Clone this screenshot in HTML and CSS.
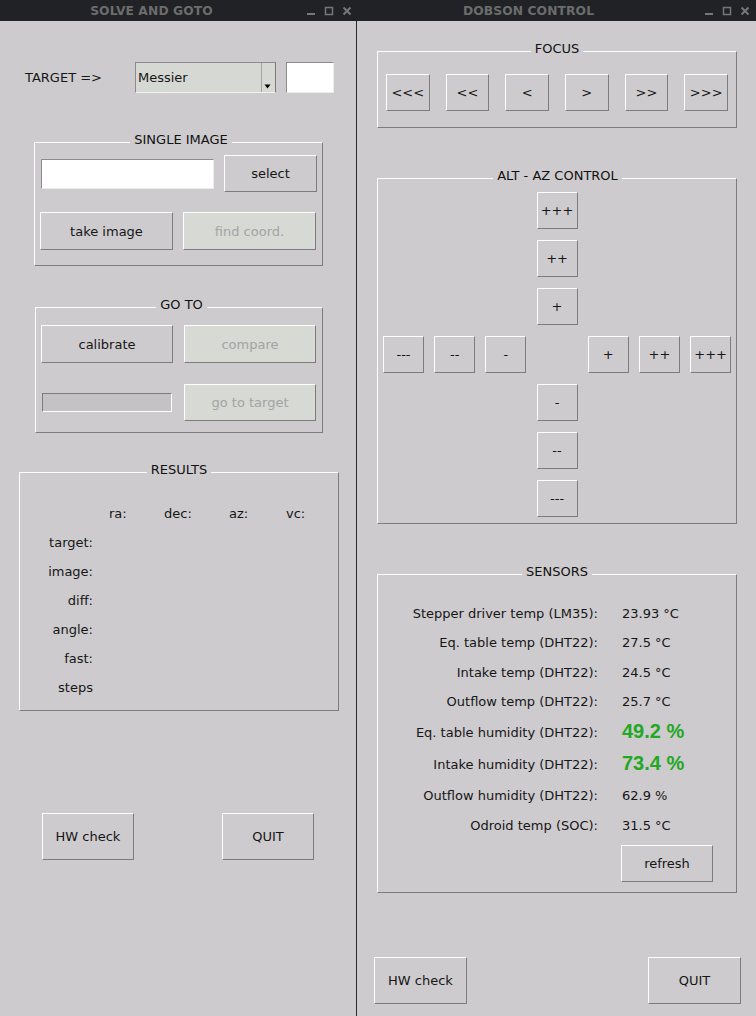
FILE: index.html
```html
<!DOCTYPE html>
<html>
<head>
<meta charset="utf-8">
<title>Dobson</title>
<link rel="stylesheet" href="styles.css">
</head>
<body>
<div class="titlebar">
  <div class="tb-seg tb-left">
    <span class="tb-title">SOLVE AND GOTO</span>
    <svg class="tb-ctrl" viewBox="0 0 53 21" width="53" height="21"><path d="M4 14h8" stroke="#777" stroke-width="2"/><rect x="22.5" y="7.5" width="7" height="7" fill="none" stroke="#777" stroke-width="1.5"/><path d="M40.5 7.5l7 7M47.5 7.5l-7 7" stroke="#777" stroke-width="2"/></svg>
  </div>
  <div class="tb-seg tb-right">
    <span class="tb-title">DOBSON CONTROL</span>
    <svg class="tb-ctrl" viewBox="0 0 53 21" width="53" height="21"><path d="M4 14h8" stroke="#777" stroke-width="2"/><rect x="22.5" y="7.5" width="7" height="7" fill="none" stroke="#777" stroke-width="1.5"/><path d="M40.5 7.5l7 7M47.5 7.5l-7 7" stroke="#777" stroke-width="2"/></svg>
  </div>
</div>
<div class="main">
  <section class="pane pane-left">
    <div class="target-row">
      <span class="target-label">TARGET =&gt;</span>
      <div class="combo">
        <span class="combo-text">Messier</span>
        <span class="combo-arrow"><svg viewBox="0 0 12 29" width="12" height="29"><path d="M2.5 21.5h6l-3 4z" fill="#000"/></svg></span>
      </div>
      <div class="entry entry-small"></div>
    </div>

    <fieldset class="frame frame-single">
      <legend>SINGLE IMAGE</legend>
      <div class="row row-a">
        <div class="entry entry-file"></div>
        <button class="btn btn-select">select</button>
      </div>
      <div class="row row-b">
        <button class="btn btn-half">take image</button>
        <button class="btn btn-half disabled">find coord.</button>
      </div>
    </fieldset>

    <fieldset class="frame frame-goto">
      <legend>GO TO</legend>
      <div class="row row-c">
        <button class="btn btn-goto">calibrate</button>
        <button class="btn btn-goto disabled">compare</button>
      </div>
      <div class="row row-d">
        <div class="progress"></div>
        <button class="btn btn-goto btn-gototarget disabled">go to target</button>
      </div>
    </fieldset>

    <fieldset class="frame frame-results">
      <legend>RESULTS</legend>
      <div class="results-grid">
        <span></span><span>ra:</span><span>dec:</span><span>az:</span><span>vc:</span>
        <span class="rl">target:</span><span></span><span></span><span></span><span></span>
        <span class="rl">image:</span><span></span><span></span><span></span><span></span>
        <span class="rl">diff:</span><span></span><span></span><span></span><span></span>
        <span class="rl">angle:</span><span></span><span></span><span></span><span></span>
        <span class="rl">fast:</span><span></span><span></span><span></span><span></span>
        <span class="rl">steps</span><span></span><span></span><span></span><span></span>
      </div>
    </fieldset>

    <div class="bottom-left">
      <button class="btn btn-big">HW check</button>
      <button class="btn btn-big btn-quit-left">QUIT</button>
    </div>
  </section>

  <section class="pane pane-right">
    <fieldset class="frame frame-wide frame-focus">
      <legend>FOCUS</legend>
      <div class="focus-row">
        <button class="btn btn-focus">&lt;&lt;&lt;</button>
        <button class="btn btn-focus">&lt;&lt;</button>
        <button class="btn btn-focus">&lt;</button>
        <button class="btn btn-focus">&gt;</button>
        <button class="btn btn-focus">&gt;&gt;</button>
        <button class="btn btn-focus">&gt;&gt;&gt;</button>
      </div>
    </fieldset>

    <fieldset class="frame frame-wide frame-altaz">
      <legend>ALT - AZ CONTROL</legend>
      <div class="altaz-grid">
        <button class="btn btn-az c4 r1">+++</button>
        <button class="btn btn-az c4 r2">++</button>
        <button class="btn btn-az c4 r3">+</button>
        <button class="btn btn-az c1 r4">---</button>
        <button class="btn btn-az c2 r4">--</button>
        <button class="btn btn-az c3 r4">-</button>
        <button class="btn btn-az c5 r4">+</button>
        <button class="btn btn-az c6 r4">++</button>
        <button class="btn btn-az c7 r4">+++</button>
        <button class="btn btn-az c4 r5">-</button>
        <button class="btn btn-az c4 r6">--</button>
        <button class="btn btn-az c4 r7">---</button>
      </div>
    </fieldset>

    <fieldset class="frame frame-wide frame-sensors">
      <legend>SENSORS</legend>
      <div class="sensor-grid">
        <span class="sl">Stepper driver temp (LM35):</span><span class="sv">23.93 °C</span>
        <span class="sl">Eq. table temp (DHT22):</span><span class="sv">27.5 °C</span>
        <span class="sl">Intake temp (DHT22):</span><span class="sv">24.5 °C</span>
        <span class="sl">Outflow temp (DHT22):</span><span class="sv">25.7 °C</span>
        <span class="sl">Eq. table humidity (DHT22):</span><span class="sv green">49.2 %</span>
        <span class="sl">Intake humidity (DHT22):</span><span class="sv green">73.4 %</span>
        <span class="sl">Outflow humidity (DHT22):</span><span class="sv">62.9 %</span>
        <span class="sl">Odroid temp (SOC):</span><span class="sv">31.5 °C</span>
        <span></span><button class="btn btn-refresh">refresh</button>
      </div>
    </fieldset>

    <div class="bottom-right">
      <button class="btn btn-big2">HW check</button>
      <button class="btn btn-big2">QUIT</button>
    </div>
  </section>
</div>
</body>
</html>
```

FILE: styles.css
```css
* { box-sizing: border-box; }

html, body {
  margin: 0;
  height: 1016px;
  overflow: hidden;
}

body {
  background: #cdcbce;
  font-family: "DejaVu Sans", "Noto Sans", sans-serif;
  font-size: 13px;
  color: #161616;
}

/* ---------- title bar ---------- */
.titlebar {
  display: flex;
  height: 21px;
  background: #202226;
}

.tb-seg {
  display: flex;
  align-items: center;
  height: 21px;
}

.tb-left { width: 356px; }

.tb-right {
  flex: 1;
  padding-right: 2px;
}

.tb-title {
  flex: 1;
  text-align: center;
  font-weight: bold;
  font-size: 12.3px;
  color: #6c6c6c;
  letter-spacing: 0.1px;
}

.tb-ctrl {
  flex: none;
  display: block;
}

/* ---------- panes ---------- */
.main {
  display: flex;
  height: 995px;
}

.pane-left {
  width: 357px;
  flex: none;
  border-right: 1px solid #2a2a2a;
  padding-top: 41px;
}

.pane-right {
  flex: 1;
  padding-top: 20px;
}

/* ---------- generic widgets ---------- */
.btn {
  font-family: "DejaVu Sans", "Noto Sans", sans-serif;
  font-size: 13px;
  color: #161616;
  background: #cdcbce;
  border: 1px solid;
  border-color: #ffffff #7c7c7c #7c7c7c #ffffff;
  border-radius: 0;
  padding: 0;
  margin: 0;
  flex: none;
}

.btn.disabled {
  background: #d7d9d5;
  color: #a3a3a3;
}

.entry {
  background: #ffffff;
  border: 1px solid;
  border-color: #8c8c8c #ececec #ececec #8c8c8c;
  flex: none;
}

.frame {
  margin: 0;
  min-width: 0;
  border: 1px solid;
  border-color: #ffffff #7c7c7c #7c7c7c #ffffff;
}

.frame legend {
  margin: 0 auto;
  padding: 0 4px 4px;
  line-height: 16px;
  font-size: 13px;
  color: #111;
}

.row {
  display: flex;
  align-items: center;
}

/* ---------- left pane ---------- */
.target-row {
  display: flex;
  align-items: center;
  height: 31px;
  padding-left: 25px;
}

.target-label { width: 110px; }

.combo {
  display: flex;
  width: 141px;
  height: 31px;
  background: #d6d8d4;
  border: 1px solid;
  border-color: #8c8c8c #7c7c7c #f2f2f2 #8c8c8c;
}

.combo-text {
  flex: 1;
  padding-left: 2px;
  line-height: 29px;
}

.combo-arrow {
  width: 14px;
  border-left: 1px solid #a4a4a4;
  display: flex;
}

.combo-arrow svg { display: block; }

.entry-small {
  width: 48px;
  height: 31px;
  margin-left: 10px;
}

.frame-single {
  margin: 39px 0 0 34px;
  width: 289px;
  padding: 3px 0 15px 5px;
}

.row-a {
  height: 37px;
  gap: 10px;
}

.entry-file {
  width: 173px;
  height: 30px;
  margin-left: 1px;
}

.btn-select {
  width: 93px;
  height: 37px;
}

.row-b {
  margin-top: 20px;
  gap: 10px;
}

.btn-half {
  width: 133px;
  height: 38px;
}

.frame-goto {
  margin: 31px 0 0 35px;
  width: 288px;
  padding: 8px 0 11px 5px;
}

.row-c { gap: 11px; }

.btn-goto {
  width: 132px;
  height: 38px;
}

.row-d {
  margin-top: 21px;
  height: 37px;
}

.progress {
  width: 130px;
  height: 19px;
  margin-left: 1px;
  background: #c4c2c5;
  border: 1px solid;
  border-color: #7c7c7c #ffffff #ffffff #7c7c7c;
}

.btn-gototarget {
  margin-left: 12px;
  height: 37px;
}

.frame-results {
  margin: 29px 0 0 19px;
  width: 320px;
  padding: 17px 0 8px 0;
}

.results-grid {
  display: grid;
  grid-template-columns: 89px 55px 65px 57px 1fr;
  grid-auto-rows: 29px;
  align-items: center;
}

.rl {
  text-align: right;
  padding-right: 16px;
}

.bottom-left {
  display: flex;
  margin-top: 102px;
  padding-left: 42px;
}

.btn-big {
  width: 92px;
  height: 47px;
}

.btn-quit-left { margin-left: 88px; }

/* ---------- right pane ---------- */
.frame-wide {
  width: 360px;
  margin-left: 20px;
}

.frame-focus {
  padding: 13px 8px 16px 8px;
}

.focus-row {
  display: flex;
  justify-content: space-between;
}

.btn-focus {
  width: 43.5px;
  height: 37px;
}

.frame-altaz {
  margin-top: 40px;
  padding: 4px 4px 6px 5px;
}

.altaz-grid {
  display: grid;
  grid-template-columns: repeat(7, 41px);
  grid-template-rows: repeat(7, 37px);
  column-gap: 10.2px;
  row-gap: 11px;
}

.btn-az {
  width: 41px;
  height: 37px;
  white-space: nowrap;
  overflow: hidden;
}

.c1 { grid-column: 1; }
.c2 { grid-column: 2; }
.c3 { grid-column: 3; }
.c4 { grid-column: 4; }
.c5 { grid-column: 5; }
.c6 { grid-column: 6; }
.c7 { grid-column: 7; }
.r1 { grid-row: 1; }
.r2 { grid-row: 2; }
.r3 { grid-row: 3; }
.r4 { grid-row: 4; }
.r5 { grid-row: 5; }
.r6 { grid-row: 6; }
.r7 { grid-row: 7; }

.frame-sensors {
  margin-top: 40px;
  padding: 15px 0 10px 0;
}

.sensor-grid {
  display: grid;
  grid-template-columns: 220px 1fr;
  grid-template-rows: repeat(4, 29.3px) 32.5px 32.5px 29.3px 29.3px auto;
  column-gap: 24px;
  align-items: center;
}

.sl { text-align: right; }

.green {
  font-family: "Liberation Sans", Arial, sans-serif;
  font-weight: bold;
  font-size: 20px;
  color: #22a822;
  position: relative;
  top: -1px;
}

.btn-refresh {
  width: 92px;
  height: 37px;
  margin-top: 5px;
  margin-left: -1px;
}

.bottom-right {
  display: flex;
  justify-content: space-between;
  margin-top: 64px;
  padding: 0 15px 0 17px;
}

.btn-big2 {
  width: 93px;
  height: 47px;
}
```
